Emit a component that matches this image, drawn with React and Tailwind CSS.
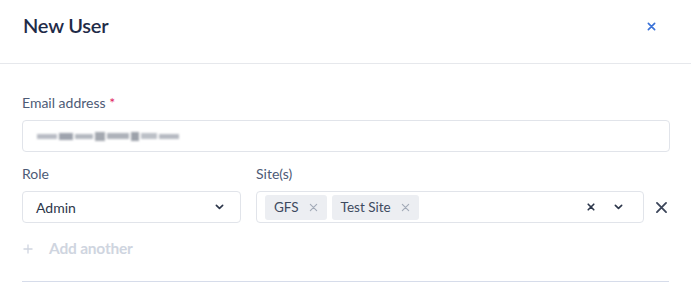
import React from "react";

function XIcon({ className, strokeWidth = 2 }) {
  return (
    <svg viewBox="0 0 10 10" className={className} fill="none" stroke="currentColor" strokeWidth={strokeWidth} strokeLinecap="round">
      <path d="M1.5 1.5l7 7M8.5 1.5l-7 7" />
    </svg>
  );
}

function Chevron({ className }) {
  return (
    <svg viewBox="0 0 10 6" className={className} fill="none" stroke="currentColor" strokeWidth="1.8" strokeLinecap="round" strokeLinejoin="round">
      <path d="M1.5 1.2L5 4.6l3.5-3.4" />
    </svg>
  );
}

function Chip({ label }) {
  return (
    <div className="flex items-center h-[25px] pl-[9px] pr-[9px] gap-[10px] rounded-[3px] bg-[#eceef2] text-[13.5px] text-[#3d4a5f]">
      <span>{label}</span>
      <XIcon className="w-[9px] h-[9px] text-[#a3abb8]" strokeWidth={1.3} />
    </div>
  );
}

export default function App() {
  return (
    <div className="w-[691px] h-[286px] bg-white overflow-hidden" style={{ fontFamily: "Lato, 'Noto Sans', sans-serif" }}>
      <div className="h-[64px] border-b border-[#e6e8ec] flex items-start justify-between pl-[23px] pr-[35px] pt-[11px]">
        <h2 className="text-[20px] leading-7 font-semibold text-[#1f2b48] tracking-[-0.2px]">New User</h2>
        <button className="mt-[11px] text-[#3a72d8]">
          <XIcon className="w-[9px] h-[9px]" strokeWidth={1.8} />
        </button>
      </div>

      <div className="px-[22px] pt-[29px]">
        <label className="block text-[14px] leading-5 text-[#4d5b76]">
          Email address <span className="text-[#e0245e]">*</span>
        </label>
        <div className="mt-[7px] h-[32px] w-[648px] border border-[#e1e4ea] rounded-[4px] flex items-center px-[14px]">
          <div className="flex items-center gap-[2px] blur-[1.2px]">
            <span className="w-[20px] h-[5px] bg-[#b8bcc4]" />
            <span className="w-[14px] h-[7px] bg-[#9ea3ad]" />
            <span className="w-[18px] h-[5px] bg-[#b4b8c0]" />
            <span className="w-[10px] h-[9px] bg-[#a4a8b0]" />
            <span className="w-[22px] h-[6px] bg-[#aeb2ba]" />
            <span className="w-[8px] h-[9px] bg-[#9ca1aa]" />
            <span className="w-[16px] h-[6px] bg-[#bcc0c7]" />
            <span className="w-[20px] h-[5px] bg-[#b6bac2]" />
          </div>
        </div>

        <div className="mt-[12px] flex items-end">
          <div className="w-[219px]">
            <div className="text-[14px] leading-5 text-[#4d5b76]">Role</div>
            <div className="mt-[7px] h-[32px] border border-[#e1e4ea] rounded-[4px] flex items-center justify-between pl-[13px] pr-[16px]">
              <span className="text-[14px] text-[#2c364a]">Admin</span>
              <Chevron className="w-[9px] h-[6px] text-[#2c364a]" />
            </div>
          </div>
          <div className="ml-[15px] w-[388px]">
            <div className="text-[14px] leading-5 text-[#4d5b76]">Site(s)</div>
            <div className="mt-[7px] h-[32px] border border-[#e1e4ea] rounded-[4px] flex items-center pl-[8px] pr-[20px]">
              <div className="flex items-center gap-[5px]">
                <Chip label="GFS" />
                <Chip label="Test Site" />
              </div>
              <div className="ml-auto flex items-center gap-[19px] text-[#2c364a]">
                <XIcon className="w-[8px] h-[8px]" strokeWidth={2} />
                <Chevron className="w-[9px] h-[6px]" />
              </div>
            </div>
          </div>
          <div className="flex-1 h-[32px] flex items-center justify-end pr-[1px]">
            <XIcon className="w-[13px] h-[13px] text-[#3b4559]" strokeWidth={1.4} />
          </div>
        </div>

        <div className="mt-[16px] flex items-center h-5 text-[#cfd5e0]">
          <svg viewBox="0 0 10 10" className="w-[10px] h-[10px] ml-[1px] mr-[16px]" fill="none" stroke="currentColor" strokeWidth="1.3">
            <path d="M5 0.5v9M0.5 5h9" />
          </svg>
          <span className="text-[15.5px] font-bold tracking-[-0.2px]">Add another</span>
        </div>

        <div className="mt-[22px] border-t border-[#d6dcea]" />
      </div>
    </div>
  );
}
